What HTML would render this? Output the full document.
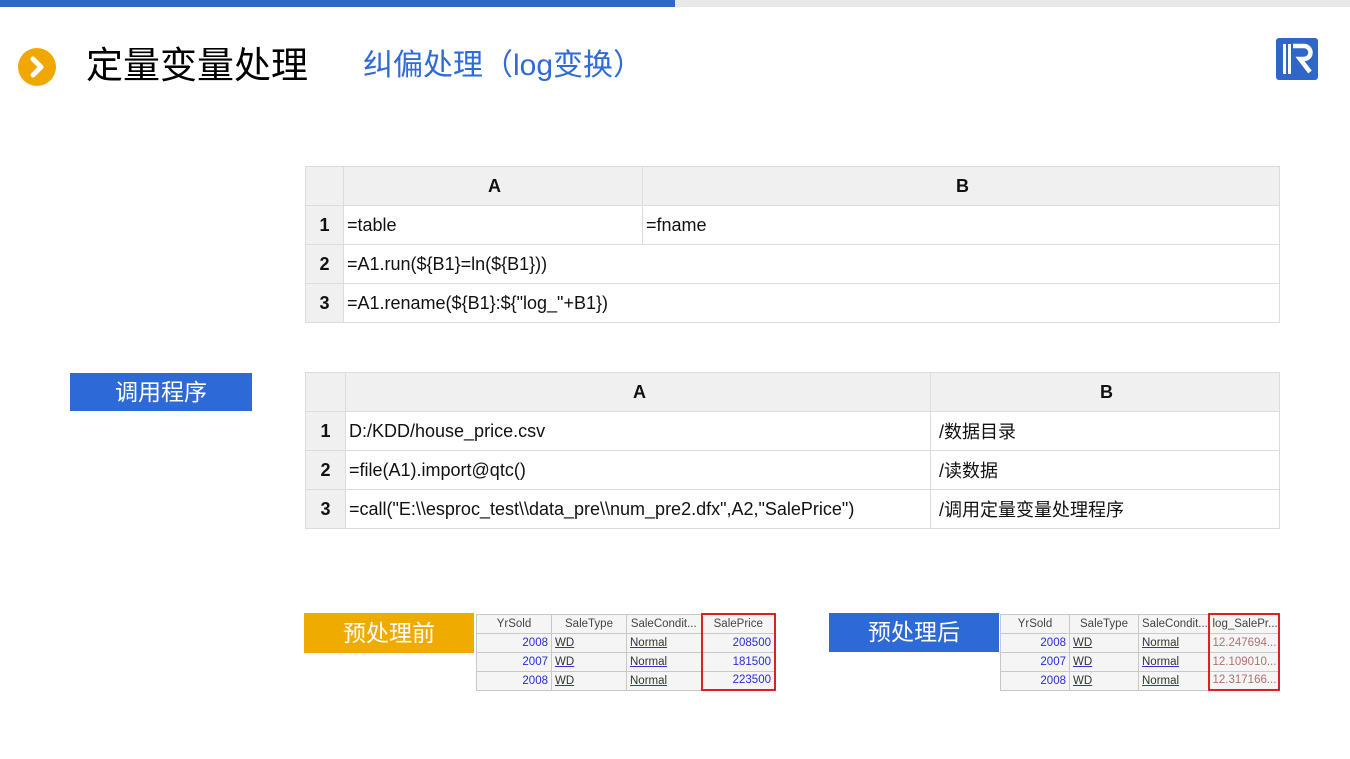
<!DOCTYPE html>
<html><head><meta charset="utf-8"><style>
*{margin:0;padding:0;box-sizing:border-box}
body{width:1350px;height:759px;background:#fff;position:relative;overflow:hidden;font-family:"Liberation Sans","Noto Sans CJK SC",sans-serif}
.a{position:absolute}
table{border-collapse:collapse;position:absolute;table-layout:fixed}
.t td{border:1px solid #dcdcdc;height:39px;font-size:18px;color:#111;padding-left:3px;white-space:nowrap;overflow:hidden}
.t td.h{background:#f0f0f0;font-weight:bold;text-align:center;padding:0}
.t tr:first-child td{font-weight:bold;text-align:center;background:#f0f0f0}
.lbl{color:#fff;font-size:23px;text-align:center}
.s td{border:1px solid #c8c8c8;background:#f4f5f4;font-size:11.5px;height:19px;padding:0 3px;white-space:nowrap;overflow:hidden;color:#333}
.s tr:first-child td{text-align:center;color:#444}
.s td.n{color:#2b2bd8;text-align:right}
.s td.u{color:#333;text-decoration:underline;text-decoration-color:#3030e0}
.s td.r{color:#b07070;text-align:right}
</style></head><body>
<div class="a" style="left:0;top:0;width:675px;height:7px;background:#2e67c8"></div>
<div class="a" style="left:675px;top:0;width:675px;height:7px;background:#e8e8e8"></div>
<div class="a" style="left:18px;top:48px;width:38px;height:38px;border-radius:50%;background:#f0a800"></div>
<svg class="a" style="left:18px;top:48px" width="38" height="38"><path d="M15 11 L23 19 L15 27" stroke="#fff" stroke-width="5" fill="none" stroke-linecap="round" stroke-linejoin="round"/></svg>
<div class="a" style="left:86px;top:43px;font-size:37px;color:#000;line-height:46px">定量变量处理</div>
<div class="a" style="left:363px;top:46px;font-size:30px;color:#2e6ad8;line-height:40px">纠偏处理（log变换）</div>
<svg class="a" style="left:1276px;top:38px" width="42" height="42"><rect width="42" height="42" rx="3" fill="#2f66c8"/><rect x="7" y="6" width="3" height="30" fill="#fff"/><rect x="12" y="6" width="3" height="30" fill="#fff"/><path d="M17 8 H28 a6.5 6.5 0 0 1 0 13 H24 L34 34" stroke="#fff" stroke-width="4.5" fill="none"/></svg>

<table class="t" style="left:305px;top:166px;width:975px">
<colgroup><col style="width:38px"><col style="width:299px"><col></colgroup>
<tr><td></td><td>A</td><td>B</td></tr>
<tr><td class="h">1</td><td>=table</td><td>=fname</td></tr>
<tr><td class="h">2</td><td colspan="2">=A1.run(${B1}=ln(${B1}))</td></tr>
<tr><td class="h">3</td><td colspan="2">=A1.rename(${B1}:${"log_"+B1})</td></tr>
</table>

<div class="a lbl" style="left:70px;top:373px;width:182px;height:38px;background:#2d6ad8;line-height:38px">调用程序</div>
<table class="t" style="left:305px;top:372px;width:975px">
<colgroup><col style="width:40px"><col style="width:585px"><col></colgroup>
<tr><td></td><td>A</td><td>B</td></tr>
<tr><td class="h">1</td><td>D:/KDD/house_price.csv</td><td style="padding-left:8px">/数据目录</td></tr>
<tr><td class="h">2</td><td>=file(A1).import@qtc()</td><td style="padding-left:8px">/读数据</td></tr>
<tr><td class="h">3</td><td>=call("E:\\esproc_test\\data_pre\\num_pre2.dfx",A2,"SalePrice")</td><td style="padding-left:8px">/调用定量变量处理程序</td></tr>
</table>

<div class="a lbl" style="left:304px;top:613px;width:170px;height:40px;background:#f0ab00;line-height:40px">预处理前</div>
<table class="s" style="left:476px;top:613px;width:300px">
<colgroup><col style="width:75px"><col style="width:75px"><col style="width:75px"><col></colgroup>
<tr><td>YrSold</td><td>SaleType</td><td>SaleCondit...</td><td style="border:2px solid #e02020;border-bottom:none">SalePrice</td></tr>
<tr><td class="n">2008</td><td class="u">WD</td><td class="u">Normal</td><td class="n" style="border-left:2px solid #e02020;border-right:2px solid #e02020">208500</td></tr>
<tr><td class="n">2007</td><td class="u">WD</td><td class="u">Normal</td><td class="n" style="border-left:2px solid #e02020;border-right:2px solid #e02020">181500</td></tr>
<tr><td class="n">2008</td><td class="u">WD</td><td class="u">Normal</td><td class="n" style="border:2px solid #e02020;border-top:none">223500</td></tr>
</table>

<div class="a lbl" style="left:829px;top:613px;width:170px;height:39px;background:#2d6ad8;line-height:39px">预处理后</div>
<table class="s" style="left:1000px;top:613px;width:280px">
<colgroup><col style="width:69px"><col style="width:69px"><col style="width:70px"><col></colgroup>
<tr><td>YrSold</td><td>SaleType</td><td>SaleCondit...</td><td style="border:2px solid #e02020;border-bottom:none;text-align:left">log_SalePr...</td></tr>
<tr><td class="n">2008</td><td class="u">WD</td><td class="u">Normal</td><td class="r" style="border-left:2px solid #e02020;border-right:2px solid #e02020">12.247694...</td></tr>
<tr><td class="n">2007</td><td class="u">WD</td><td class="u">Normal</td><td class="r" style="border-left:2px solid #e02020;border-right:2px solid #e02020">12.109010...</td></tr>
<tr><td class="n">2008</td><td class="u">WD</td><td class="u">Normal</td><td class="r" style="border:2px solid #e02020;border-top:none">12.317166...</td></tr>
</table>
</body></html>
